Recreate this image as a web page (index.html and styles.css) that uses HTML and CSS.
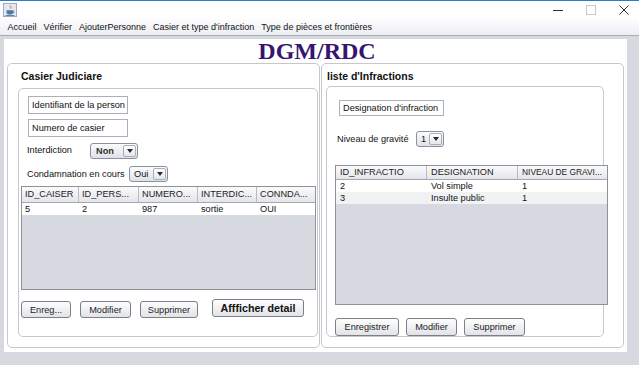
FILE: index.html
```html
<!DOCTYPE html>
<html lang="fr">
<head>
<meta charset="utf-8">
<title>DGM/RDC</title>
<link rel="stylesheet" href="styles.css">
</head>
<body>
<div class="titlebar">
  <span class="app-icon">
    <svg width="14" height="14" viewBox="0 0 14 14">
      <rect x="0.5" y="0.5" width="13" height="13" fill="#e3e9f0" stroke="#9aabbf"/>
      <path d="M7 2 C5.5 3.5 8.5 4.5 6.8 6.5 C9 5 7.5 3.5 7 2 Z" fill="#e8742a"/>
      <path d="M8.6 3.2 C8 4.3 9.4 4.8 8.5 6 C9.8 5.2 9.2 4 8.6 3.2 Z" fill="#f09a3e"/>
      <path d="M3.5 7.2 H10 V9.6 C10 11 8.8 11.6 6.8 11.6 C4.7 11.6 3.5 11 3.5 9.6 Z" fill="#4f77a3"/>
      <path d="M10 8 C11.6 8 11.6 10 10 10" fill="none" stroke="#4f77a3" stroke-width="0.9"/>
      <rect x="2.5" y="12" width="9" height="0.9" fill="#4f77a3"/>
    </svg>
  </span>
  <div class="win-controls">
    <span class="wc">
      <svg width="10" height="10" viewBox="0 0 10 10"><line x1="0" y1="5.5" x2="10" y2="5.5" stroke="#333" stroke-width="1"/></svg>
    </span>
    <span class="wc">
      <svg width="10" height="10" viewBox="0 0 10 10"><rect x="0.5" y="0.5" width="9" height="9" fill="none" stroke="#c9c9c9" stroke-width="1"/></svg>
    </span>
    <span class="wc">
      <svg width="10" height="10" viewBox="0 0 10 10"><path d="M0.5 0.5 L9.5 9.5 M9.5 0.5 L0.5 9.5" stroke="#333" stroke-width="1"/></svg>
    </span>
  </div>
</div>
<nav class="menubar">
  <span class="menu-item">Accueil</span>
  <span class="menu-item">Vérifier</span>
  <span class="menu-item">AjouterPersonne</span>
  <span class="menu-item">Casier et type d'infraction</span>
  <span class="menu-item">Type de pièces et frontières</span>
</nav>
<div class="frame">
  <main class="content">
    <h1 class="brand">DGM/RDC</h1>
    <div class="panels">
      <section class="group group-left">
        <h2 class="group-title">Casier Judiciare</h2>
        <div class="inner inner-left">
          <div class="field">Identifiant de la person</div>
          <div class="field field-next">Numero de casier</div>
          <div class="form-row row-interdiction">
            <span class="label label-interdiction">Interdiction</span>
            <span class="combo combo-non"><span class="combo-val strong">Non</span><span class="combo-arrow"><i class="tri"></i></span></span>
          </div>
          <div class="form-row row-condamnation">
            <span class="label label-condamnation">Condamnation en cours</span>
            <span class="combo combo-oui"><span class="combo-val">Oui</span><span class="combo-arrow"><i class="tri"></i></span></span>
          </div>
          <div class="table table-left">
            <div class="thead cols-left">
              <span class="th">ID_CAISER</span>
              <span class="th">ID_PERS...</span>
              <span class="th">NUMERO...</span>
              <span class="th">INTERDIC...</span>
              <span class="th">CONNDA...</span>
            </div>
            <div class="tr cols-left">
              <span class="td">5</span>
              <span class="td">2</span>
              <span class="td">987</span>
              <span class="td">sortie</span>
              <span class="td">OUI</span>
            </div>
          </div>
          <div class="btn-row btn-row-left">
            <span class="btn btn-enreg">Enreg...</span>
            <span class="btn btn-mod">Modifier</span>
            <span class="btn btn-supp">Supprimer</span>
            <span class="btn btn-detail">Affficher detail</span>
          </div>
        </div>
      </section>
      <section class="group group-right">
        <h2 class="group-title title-right">liste d'Infractions</h2>
        <div class="inner inner-right">
          <div class="field field-designation">Designation d'infraction</div>
          <div class="form-row row-niveau">
            <span class="label label-niveau">Niveau de gravité</span>
            <span class="combo combo-one"><span class="combo-val">1</span><span class="combo-arrow"><i class="tri"></i></span></span>
          </div>
          <div class="table table-right">
            <div class="thead cols-right thead-right">
              <span class="th">ID_INFRACTIO</span>
              <span class="th">DESIGNATION</span>
              <span class="th th-tight">NIVEAU DE GRAVI...</span>
            </div>
            <div class="tr cols-right">
              <span class="td">2</span>
              <span class="td">Vol simple</span>
              <span class="td">1</span>
            </div>
            <div class="tr cols-right tr-alt">
              <span class="td">3</span>
              <span class="td">Insulte public</span>
              <span class="td">1</span>
            </div>
          </div>
          <div class="btn-row btn-row-right">
            <span class="btn btn-enregistrer">Enregistrer</span>
            <span class="btn btn-mod2">Modifier</span>
            <span class="btn btn-supp2">Supprimer</span>
          </div>
        </div>
      </section>
    </div>
  </main>
</div>
</body>
</html>
```
FILE: styles.css
```css
* { box-sizing: border-box; }

html, body {
  margin: 0;
  padding: 0;
}

body {
  width: 639px;
  height: 365px;
  overflow: hidden;
  background: #d6d9df;
  font-family: "Liberation Sans", Arial, sans-serif;
  font-size: 9.2px;
  color: #1a1a1a;
}

/* ---------- title bar ---------- */
.titlebar {
  height: 19px;
  background: #ffffff;
  border-top: 1px solid #2a7bd6;
  display: flex;
  align-items: center;
  padding-left: 3px;
}

.app-icon {
  display: flex;
  width: 14px;
  height: 14px;
}

.win-controls {
  margin-left: auto;
  margin-right: -1px;
  display: flex;
  height: 100%;
}

.wc {
  width: 33px;
  display: flex;
  align-items: center;
  justify-content: center;
}

/* ---------- menu bar ---------- */
.menubar {
  height: 17px;
  background: linear-gradient(#fdfdfe, #eceef2);
  border-bottom: 1px solid #a7abb2;
  display: flex;
  align-items: center;
  padding-left: 4px;
  font-size: 9px;
  color: #111;
}

.menu-item {
  padding: 0 3.5px;
  line-height: 15px;
  white-space: nowrap;
}

/* ---------- frame ---------- */
.frame {
  padding: 3px 12px 0 4px;
  height: 329px;
}

.content {
  background: #ffffff;
  height: 313px;
  display: flex;
  flex-direction: column;
}

.brand {
  margin: 0;
  height: 24px;
  font: bold 24px/24px "Liberation Serif", "Times New Roman", serif;
  color: #36146f;
  text-align: center;
  padding-left: 3px;
}

.panels {
  display: flex;
  gap: 1px;
  padding-left: 3px;
}

.group {
  height: 285px;
  border: 1px solid #c4c8cf;
  border-radius: 5px;
  display: flex;
  flex-direction: column;
  align-items: flex-start;
}

.group-left {
  width: 313px;
  padding: 6px 0 0 10px;
}

.group-right {
  width: 303px;
  padding: 6px 0 0 4px;
}

.group-title {
  margin: 0 0 5px 3px;
  font: bold 10.5px/13px "Liberation Sans", Arial, sans-serif;
  color: #111;
  white-space: nowrap;
}

.title-right {
  margin: 0 0 3px 1px;
}

.inner {
  border: 1px solid #c4c8cf;
  border-radius: 5px;
  display: flex;
  flex-direction: column;
  align-items: flex-start;
}

.inner-left {
  width: 300px;
  height: 249px;
  padding: 7px 0 0 9px;
}

.inner-right {
  width: 278px;
  height: 251px;
  padding: 13px 0 0 12px;
}

/* ---------- fields ---------- */
.field {
  width: 100px;
  height: 18px;
  border: 1px solid #abb0b8;
  background: #fff;
  padding-left: 3px;
  line-height: 16px;
  white-space: nowrap;
  overflow: hidden;
  color: #111;
}

.field-next {
  margin-top: 5px;
}

.field-designation {
  width: 105px;
  height: 17px;
  line-height: 15px;
}

.form-row {
  display: flex;
  align-items: center;
  margin-left: -1px;
}

.row-interdiction { margin-top: 6px; }
.row-condamnation { margin-top: 7px; }
.row-niveau { margin-top: 15px; margin-left: -2px; }

.label {
  white-space: nowrap;
  color: #111;
}

.label-interdiction { width: 63px; margin-top: -3px; }
.label-condamnation { width: 102px; }
.label-niveau { width: 79px; }

/* ---------- combo boxes ---------- */
.combo {
  display: flex;
  height: 16px;
  border: 1px solid #8b919a;
  border-radius: 3px;
  background: linear-gradient(#fbfcfd, #dde1e7);
  overflow: hidden;
}

.combo-non { width: 48px; }
.combo-oui { width: 39px; }
.combo-one { width: 28px; height: 16px; }

.combo-val {
  flex: 1;
  padding-left: 4px;
  line-height: 14px;
  color: #111;
}

.combo-val.strong {
  font-weight: bold;
  color: #333;
  padding-left: 5px;
}

.combo-arrow {
  width: 13px;
  margin: 1px 1px 1px 0;
  border: 1px solid #a9aeb7;
  border-radius: 2px;
  background: linear-gradient(#ffffff, #e4e7eb);
  display: flex;
  align-items: center;
  justify-content: center;
}

.tri {
  width: 0;
  height: 0;
  border-left: 3px solid transparent;
  border-right: 3px solid transparent;
  border-top: 4px solid #2a2a2a;
}

/* ---------- tables ---------- */
.table {
  border: 1px solid #8e9299;
  background: #d6d9df;
  overflow: hidden;
}

.table-left {
  width: 295px;
  height: 104px;
  margin: 4px 0 0 -7px;
}

.table-right {
  width: 273px;
  height: 140px;
  margin: 18px 0 0 -4px;
  flex-shrink: 0;
}

.cols-left {
  display: grid;
  grid-template-columns: 57px 60px 59px 59px 58px;
}

.cols-right {
  display: grid;
  grid-template-columns: 91px 91px 89px;
}

.thead {
  height: 16px;
  background: linear-gradient(#fbfbfc, #e3e5e9);
  border-bottom: 1px solid #a3a7ae;
}

.thead-right {
  height: 14px;
}

.th {
  border-right: 1px solid #b8bcc2;
  padding-left: 3px;
  line-height: 15px;
  white-space: nowrap;
  overflow: hidden;
  color: #222;
}

.thead-right .th {
  line-height: 13px;
  padding-left: 4px;
}

.thead-right .th-tight {
  font-size: 8.4px;
  padding-left: 4px;
}

.th:last-child {
  border-right: none;
}

.tr {
  height: 12px;
  background: #ffffff;
}

.tr-alt {
  background: #f1f2f3;
}

.td {
  padding-left: 3px;
  line-height: 12px;
  white-space: nowrap;
  overflow: hidden;
  color: #111;
}

.cols-right .td {
  padding-left: 4px;
}

/* ---------- buttons ---------- */
.btn-row {
  display: flex;
  align-items: flex-start;
}

.btn-row-left {
  margin: 9px 0 0 -7px;
}

.btn-row-right {
  margin: 13px 0 0 -4px;
  gap: 7px;
}

.btn {
  height: 18px;
  border: 1px solid #7b7f86;
  border-radius: 3px;
  background: linear-gradient(#fefefe, #e1e3e7);
  display: flex;
  align-items: center;
  justify-content: center;
  white-space: nowrap;
  color: #1e1e1e;
}

.btn-enreg { width: 50px; height: 17px; margin-top: 2px; }
.btn-mod { width: 51px; height: 17px; margin-top: 2px; margin-left: 9px; }
.btn-supp { width: 58px; height: 17px; margin-top: 2px; margin-left: 9px; }
.btn-detail {
  width: 92px;
  margin-left: 14px;
  font: bold 10.7px "Liberation Sans", Arial, sans-serif;
  color: #111;
}

.btn-enregistrer { width: 64px; }
.btn-mod2 { width: 51px; }
.btn-supp2 { width: 61px; }
```
